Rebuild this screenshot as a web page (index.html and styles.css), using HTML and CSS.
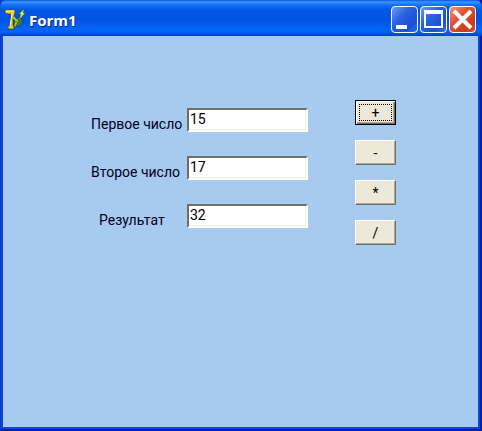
FILE: index.html
```
<!DOCTYPE html>
<html lang="ru">
<head>
    <meta charset="UTF-8">
    <meta name="viewport" content="width=device-width, initial-scale=1.0">
    <title>Form1</title>
    <link rel="stylesheet" href="styles.css">
</head>
<body>
    <div class="window">
        <header class="titlebar">
            <svg class="app-icon" width="22" height="22" viewBox="0 0 22 22">
                <path d="M1 1h10v3L9 9v8h1v3H4v-3h2l1-9V5H4L1 4z" fill="#e0cc20" stroke="#4c4410" stroke-width=".7"/>
                <path d="M2 2h8M8 4L6 18" stroke="#fffcb0"/>
                <path d="M10 11l4-3 4 2 1 4-4 4-5-2z" fill="#28785c" stroke="#123c48" stroke-width=".7"/>
                <path d="M9 8l4 4-2 5" stroke="#b8c830" stroke-width="2" fill="none"/>
                <path d="M12 12l3 3m0-3l-3 4" stroke="#b04838"/>
                <path d="M20 0l-5 5h2l-2 6 6-7h-2z" fill="#e4f838" stroke="#507818" stroke-width=".5"/>
            </svg>
            <h1>Form1</h1>
            <div class="controls">
                <button type="button" aria-label="Свернуть">
                    <svg width="25" height="25" viewBox="0 0 25 25"><path d="M4 18h11v4H4z" fill="#fff"/></svg>
                </button>
                <button type="button" aria-label="Развернуть">
                    <svg width="25" height="25" viewBox="0 0 25 25"><path d="M3 3h19v18H3zM5 7v12h15V7z" fill="#fff" fill-rule="evenodd"/></svg>
                </button>
                <button type="button" class="close" aria-label="Закрыть">
                    <svg width="25" height="25" viewBox="0 0 25 25"><path d="M4 4l17 17M21 4L4 21" stroke="#fff" stroke-width="4"/></svg>
                </button>
            </div>
        </header>
        <form class="client">
            <div class="fields">
                <label for="first">Первое число</label>
                <input type="text" id="first" value="15">
                <label for="second">Второе число</label>
                <input type="text" id="second" value="17">
                <label for="result" class="result-label">Результат</label>
                <input type="text" id="result" value="32">
            </div>
            <div class="operations">
                <button type="button" class="default">+</button>
                <button type="button">-</button>
                <button type="button">*</button>
                <button type="button">/</button>
            </div>
        </form>
    </div>
</body>
</html>
```
FILE: styles.css
```
* {
    box-sizing: border-box;
}

body {
    margin: 0;
    font-family: Roboto, Arial, sans-serif;
    font-size: 14px;
    color: #000;
    background-color: #0a3fd0;
}

.window {
    display: flex;
    flex-direction: column;
    min-height: 100vh;
    padding: 0 4px 4px 3px;
    background-color: #0846dc;
    box-shadow: inset 1px 0 #0838c8, inset -2px -2px #0020a8;
}

.titlebar {
    display: flex;
    align-items: center;
    height: 36px;
    margin: 0 -4px 0 -3px;
    padding: 3px 6px 0 4px;
    border-radius: 7px 7px 0 0;
    background: linear-gradient(#0a58d8 0, #3a94ff 2px, #1470f4 5px, #0256e4 10px, #0254e4 20px, #0464fa 29px, #0460f4 32px, #0040c4 36px);
}

.app-icon {
    margin-right: 3px;
}

h1 {
    flex: 1;
    margin: 0;
    font-family: "Open Sans", "Noto Sans", sans-serif;
    font-size: 15px;
    font-weight: bold;
    color: #fff;
    text-shadow: 1px 1px #0a2c80;
}

.controls {
    display: flex;
    gap: 2px;
}

.controls button {
    display: flex;
    width: 27px;
    height: 27px;
    padding: 0;
    border: 1px solid #fff;
    border-radius: 4px;
    background: linear-gradient(135deg, #6a9cf8, #2860e0 40%, #1c50d4 75%, #2c70f0);
}

.controls .close {
    background: linear-gradient(135deg, #f09878, #e05030 40%, #c83c18 80%, #d85838);
}

.client {
    flex: 1;
    display: flex;
    align-items: flex-start;
    padding: 64px 80px 40px 88px;
    background-color: #a6caf0;
}

.fields {
    display: grid;
    grid-template-columns: 96px 121px;
    row-gap: 24px;
    margin-top: 8px;
}

.fields label {
    padding-top: 8px;
    line-height: 16px;
    color: #000020;
    white-space: nowrap;
}

.fields .result-label {
    padding-left: 8px;
}

.fields input {
    width: 100%;
    height: 24px;
    padding: 0 1px 2px;
    border: 2px solid;
    border-color: #716f64 #fff #fff #716f64;
    border-radius: 0;
    background-color: #fff;
    box-shadow: inset -1px -1px #f1efe2;
    font: inherit;
    outline: none;
}

.operations {
    display: flex;
    flex-direction: column;
    gap: 15px;
    margin-left: 47px;
}

.operations button {
    width: 41px;
    height: 25px;
    padding: 0;
    border: 1px solid;
    border-color: #fff #716f64 #716f64 #fff;
    background-color: #ece9d8;
    box-shadow: inset -1px -1px #aca899;
    font: inherit;
    color: #000;
}

.operations .default {
    border-color: #000;
    box-shadow: inset 1px 1px #fff, inset -1px -1px #716f64, inset -2px -2px #aca899;
    outline: 1px dotted #000;
    outline-offset: -5px;
}
```
